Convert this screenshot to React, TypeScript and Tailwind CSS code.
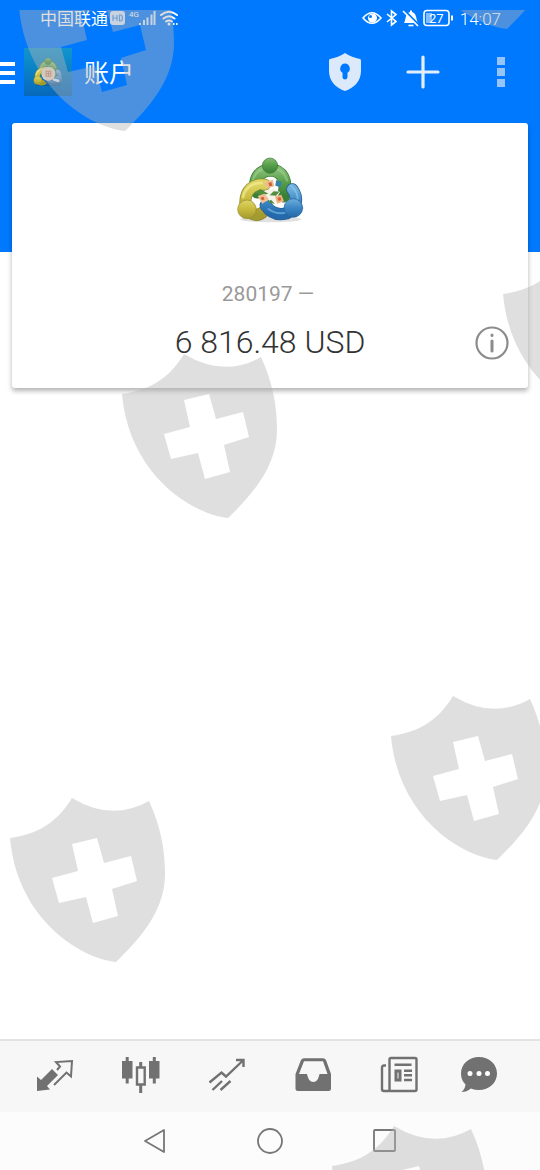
import type { ReactNode } from 'react'

const UI_FONT = "font-['Roboto','Noto_Sans_CJK_SC',sans-serif]"

function Shield({ className }: { className: string }) {
  return (
    <svg className={`absolute h-[164px] w-[158px] ${className}`} viewBox="0 0 158 164">
      <path
        fill="#b4b4b4"
        fillRule="evenodd"
        d="M1 40C28 36 47 26 63 0Q103 24 140 3C151 27 156 50 156 76C156 110 135 137 107 164C70 160 8 120 1 40Z
           M63 46L69 73L43 80L50 105L77 99L84 125L109 118L103 91L128 83L122 58L95 65L88 40Z"
      />
    </svg>
  )
}

function Watermark() {
  return (
    <div className="pointer-events-none absolute inset-x-0 top-[10px] bottom-0 overflow-hidden opacity-42" aria-hidden="true">
      <Shield className="-top-[43px] left-[18px]" />
      <Shield className="-top-[145px] left-[400px]" />
      <Shield className="top-[244px] left-[502px]" />
      <Shield className="top-[344px] left-[121px]" />
      <Shield className="top-[686px] left-[390px]" />
      <Shield className="top-[788px] left-[9px]" />
      <Shield className="top-[1116px] left-[331px]" />
    </div>
  )
}

function TraderLogo({ className, badge = false }: { className: string; badge?: boolean }) {
  return (
    <svg className={className} viewBox="0 0 300 300" fill="none" strokeLinecap="round">
      <defs>
        <linearGradient id="logoGreen" x1="0" y1="0" x2="0" y2="1">
          <stop offset="0" stopColor="#86bd76" />
          <stop offset="0.45" stopColor="#58a04b" />
          <stop offset="1" stopColor="#397f37" />
        </linearGradient>
        <linearGradient id="logoYellow" x1="0" y1="0" x2="0" y2="1">
          <stop offset="0" stopColor="#dfd565" />
          <stop offset="0.5" stopColor="#c6b93c" />
          <stop offset="1" stopColor="#a39a30" />
        </linearGradient>
        <linearGradient id="logoBlue" x1="0" y1="0" x2="0" y2="1">
          <stop offset="0" stopColor="#6eafdc" />
          <stop offset="0.5" stopColor="#3b86c4" />
          <stop offset="1" stopColor="#2469ab" />
        </linearGradient>
      </defs>
      <ellipse cx="152" cy="238" rx="92" ry="9" fill="#000" opacity="0.12" />
      {/* green */}
      <path d="M111 156C98 118 119 91 151 90C187 91 203 122 191 168" stroke="#3d7c38" strokeWidth="39" />
      <path d="M111 156C98 118 119 91 151 90C187 91 203 122 191 168" stroke="url(#logoGreen)" strokeWidth="34" />
      <path d="M99 119C106 96 126 84 150 83C176 84 194 99 201 121" stroke="#a3d18e" strokeWidth="7" opacity="0.55" />
      {/* yellow */}
      <path d="M135 134C99 130 75 151 76 190C79 226 112 233 132 214" stroke="#908a31" strokeWidth="36" />
      <path d="M135 134C99 130 75 151 76 190C79 226 112 233 132 214" stroke="url(#logoYellow)" strokeWidth="31" />
      <path d="M125 129C97 128 75 144 69 171" stroke="#f3eb91" strokeWidth="8" opacity="0.7" />
      {/* blue */}
      <path d="M217 148C236 174 230 207 200 220C168 228 149 214 137 196" stroke="#285f96" strokeWidth="37" />
      <path d="M217 148C236 174 230 207 200 220C168 228 149 214 137 196" stroke="url(#logoBlue)" strokeWidth="32" />
      <path d="M145 207C164 221 182 223 202 216" stroke="#7dc2ed" strokeWidth="6" opacity="0.6" />
      <path d="M212 136C228 150 235 166 232 183" stroke="#9bd1f1" strokeWidth="5" opacity="0.55" />
      <path d="M137 151L160 147L180 156L174 166L180 183L158 188L148 179L137 184L126 166Z" fill="#f4f3e9" />
      <path d="M104 158L121 147L145 161L124 166ZM149 166L161 154L178 155L168 167ZM143 187L153 179L165 192Z" fill="#528c3d" />
      <path d="M133 127L159 119L163 139L139 145Z" fill="#efbb8f" />
      <path d="M113 168L133 161L147 178L127 191Z" fill="#f3bf92" />
      <path d="M165 169L184 164L192 184L171 191Z" fill="#f0b384" />
      <path d="M168 121L185 125L181 142L166 137Z" fill="#3782ad" />
      <path d="M145 129L154 126L157 137L148 139ZM121 173L130 170L134 178L126 181ZM172 174L181 171L184 180L176 183Z" fill="#cc6337" />
      <circle cx="150" cy="77" r="23" fill="url(#logoGreen)" stroke="#3d7c38" strokeWidth="2" />
      <circle cx="81" cy="208" r="28" fill="url(#logoYellow)" stroke="#938c31" strokeWidth="2" />
      <circle cx="220" cy="204" r="28" fill="url(#logoBlue)" stroke="#285f96" strokeWidth="2" />
      {badge && (
        <>
          <circle cx="153" cy="162" r="48" fill="#e9d9c2" />
          <path d="M137 145H169V179H137ZM137 162H169M153 145V179" stroke="#cc8371" strokeWidth="7" />
          <path d="M190 202L219 210" stroke="#dfeef7" strokeWidth="17" />
        </>
      )}
    </svg>
  )
}

function StatusBar() {
  return (
    <div className="flex h-9 items-center justify-between pr-[39px] pl-10 text-[17px] leading-6">
      <div className="flex items-center">
        <span className="pt-px">中国联通</span>
        <svg className="h-6 w-[72px]" viewBox="0 0 72 24" fill="none">
          <rect x="2" y="5" width="15" height="14" rx="3" fill="#fff" opacity="0.85" />
          <path d="M5 9V15M9 9V15M5 12H9M11.500 9V15H12.500Q14.500 15 14.500 12T12.500 9Z" stroke="#3d91ee" strokeWidth="1.200" />
          <text x="21" y="11" fill="#fff" fontSize="8">4G</text>
          <path d="M32 17V19M36 14V19M39.500 11.500V19M43.500 8.500V19M46.500 5V19" stroke="#fff" strokeWidth="2" opacity="0.85" />
          <path d="M53 9Q61 2.500 69 9M55.500 12.500Q61 8 66.500 12.500M58 15.500Q61 13.500 64 15.500" stroke="#fff" strokeWidth="2" strokeLinecap="round" />
          <circle cx="61" cy="18" r="1.500" fill="#fff" />
          <path d="M65 18H66.500M68 18H69.500" stroke="#fff" strokeWidth="1.800" />
        </svg>
      </div>
      <div className="flex items-center gap-[6px]">
        <svg className="h-6 w-[92px]" viewBox="0 0 92 24" fill="none" stroke="#fff" strokeWidth="1.600">
          <path d="M1 12Q10 1.500 19 12Q10 22.500 1 12Z" />
          <circle cx="10.500" cy="12" r="4.500" fill="#fff" stroke="none" />
          <circle cx="8.500" cy="10.500" r="1.500" fill="#0079ff" stroke="none" />
          <path d="M25 8L34 15.500L29.500 19V5L34 8.500L25 16" />
          <path d="M42 17C44 14 43 7 48 6V4.500H50V6C55 7 54 14 56 17Z" fill="#fff" stroke="none" />
          <path d="M46.500 19.500H51.500" />
          <path d="M42.500 4.500L57.500 19.500" stroke="#0079ff" strokeWidth="2" />
          <path d="M41 5L56 20" />
          <rect x="62" y="4.500" width="25" height="15" rx="3" />
          <rect x="64" y="7" width="6" height="10" fill="#fff" opacity="0.5" stroke="none" />
          <path d="M90 9.500V14.500" strokeWidth="2" />
          <text x="67" y="16.500" fill="#fff" stroke="none" fontSize="13">27</text>
        </svg>
        <span className="pt-px font-light">14:07</span>
      </div>
    </div>
  )
}

function Toolbar() {
  return (
    <div className="flex h-[72px] items-center">
      <button className="w-6" aria-label="菜单">
        <svg className="h-6 w-6" viewBox="0 0 24 24" stroke="#fff" strokeWidth="4">
          <path d="M0 4H15M0 13H15M0 22H15" />
        </svg>
      </button>
      <div className="flex h-12 w-12 items-center justify-center bg-linear-to-b from-[#1295cf] to-[#0868bb]">
        <TraderLogo className="h-11 w-11" badge />
      </div>
      <h1 className="ml-3 flex-1 pt-1 text-[25px] leading-8">账户</h1>
      <button className="flex w-[78px] justify-center" aria-label="安全">
        <svg className="h-10 w-[34px]" viewBox="0 0 34 40">
          <path
            fill="#dce9fb"
            fillRule="evenodd"
            d="M17 1C13 4 7 6 2 7Q1 7 1 9V19C1 29 8 36 17 39C26 36 33 29 33 19V9Q33 7 32 7C27 6 21 4 17 1ZM17 11.500A5 5 0 0 1 19.500 20.700V25.500Q19 27.500 17 27.500T14.500 25.500V20.700A5 5 0 0 1 17 11.500Z"
          />
        </svg>
      </button>
      <button className="flex w-[78px] justify-center" aria-label="添加">
        <svg className="h-9 w-9" viewBox="0 0 36 36" stroke="#e3eefc" strokeWidth="3.200" strokeLinecap="round">
          <path d="M3 18H33M18 3V33" />
        </svg>
      </button>
      <button className="flex w-[78px] justify-center" aria-label="更多">
        <svg className="h-8 w-2" viewBox="0 0 8 32" fill="#96c4fa">
          <path d="M0 1H8V9H0ZM0 12H8V20H0ZM0 23H8V31H0Z" />
        </svg>
      </button>
    </div>
  )
}

function AccountCard() {
  return (
    <section className="mx-3 -mt-[129px] rounded-[3px] bg-white pt-[17px] pb-[26px] shadow-[0_3px_5px_rgba(0,0,0,0.3)]">
      <TraderLogo className="mx-auto h-[100px] w-[100px]" />
      <p className="mt-10 pr-1 text-center text-[21px] leading-7 text-[#999]">280197 —</p>
      <div className="mt-[14px] grid grid-cols-[1fr_auto_1fr] items-center">
        <span />
        <p className="text-[32px] leading-10 font-light text-[#333]">6 816.48 USD</p>
        <button className="mr-[18px] justify-self-end" aria-label="账户信息">
          <svg className="h-9 w-9" viewBox="0 0 36 36" fill="none" stroke="#8c8c8c" strokeLinecap="round">
            <circle cx="18" cy="19" r="15.500" strokeWidth="2.200" />
            <path d="M18 17V27M18 11V11.500" strokeWidth="3" />
          </svg>
        </button>
      </div>
    </section>
  )
}

function TabButton({ label, className = '', children }: { label: string; className?: string; children: ReactNode }) {
  return (
    <button className={`flex justify-center ${className}`} aria-label={label}>
      <svg className="h-10 w-10" viewBox="0 0 40 40" fill="none" stroke="#717171" strokeWidth="2.400">
        {children}
      </svg>
    </button>
  )
}

function TabBar() {
  return (
    <nav className="grid h-[73px] grid-cols-6 items-center border-t-2 border-[#e3e3e3] bg-[#f7f7f7] px-3 pb-1">
      <TabButton label="行情">
        <path d="M2 21.500L6 25L17 14L23 20L12 31L15 34.500L2 36Z" fill="#717171" stroke="none" />
        <path d="M22 15L25 11.500L21 7L37 6L36 21.500L31.500 17.500L19 30" strokeWidth="2" />
      </TabButton>
      <TabButton label="图表">
        <path d="M1 6H11.500V23.500H1ZM28 6H38.500V23.500H28Z" fill="#717171" stroke="none" />
        <path d="M6.200 2V28.500M33.300 2V28.500M19.700 7V12M19.700 30V38" strokeWidth="3" />
        <path d="M16 12.500H23.700V29.500H16Z" />
      </TabButton>
      <TabButton label="交易">
        <path d="M2.500 27.500L14.500 17.500L19 21.500L36 5.500M29 5H36.500V12M5.500 35L15 26M13.500 35L23.500 26" />
      </TabButton>
      <TabButton label="历史">
        <path
          fill="#717171"
          stroke="none"
          fillRule="evenodd"
          d="M11 3.300H30Q32 3.300 33 5L38 19V33.500Q38 36 35.500 36H5Q2.500 36 2.500 33.500V19L8 5Q9 3.300 11 3.300ZM11 6.300L6 19H14C15 24 17 27 20.300 27S25.500 24 26.500 19H34.500L30 6.300Z"
        />
      </TabButton>
      <TabButton label="新闻">
        <rect x="10.500" y="3" width="27" height="33" rx="1.500" />
        <path d="M7 10.500H5Q3 10.500 3 12.500V34Q3 36 5 36H11" />
        <path d="M15.500 9.700H32.500M25 15.700H33M25 20.300H33M25 25H33" />
        <path d="M17 16H21V25H17Z" strokeWidth="3" />
      </TabButton>
      <TabButton label="聊天" className="pr-3">
        <path
          fill="#717171"
          stroke="none"
          d="M20 2C30 2 38 9 38 18.500S30 35 20 35Q15.500 35 12 33.500C9 36 6 37 2.500 37Q6 34 6.500 29.500Q2 25 2 18.500C2 9 10 2 20 2Z"
        />
        <path d="M11 18.500H11.010M20 18.500H20.010M28.500 18.500H28.510" stroke="#fff" strokeWidth="5" strokeLinecap="round" />
      </TabButton>
    </nav>
  )
}

function SystemBar() {
  return (
    <div className="flex h-[58px] items-center justify-center bg-[#fcfcfc]">
      <button className="flex w-[115px] justify-center" aria-label="返回">
        <svg className="h-7 w-7" viewBox="0 0 28 28" fill="none" stroke="#777" strokeWidth="1.800" strokeLinejoin="round">
          <path d="M23 3V25L4 14Z" />
        </svg>
      </button>
      <button className="flex w-[115px] justify-center" aria-label="主屏幕">
        <svg className="h-7 w-7" viewBox="0 0 28 28" fill="none" stroke="#777" strokeWidth="1.800">
          <circle cx="14" cy="14" r="12" />
        </svg>
      </button>
      <button className="flex w-[115px] justify-center" aria-label="最近任务">
        <svg className="h-7 w-7" viewBox="0 0 28 28" fill="none" stroke="#777" strokeWidth="1.800">
          <rect x="3" y="3" width="21" height="21" rx="1" />
        </svg>
      </button>
    </div>
  )
}

export default function App() {
  return (
    <div className={`relative flex min-h-screen flex-col bg-white ${UI_FONT}`}>
      <header className="bg-[#0079ff] pb-36 text-white">
        <StatusBar />
        <Toolbar />
      </header>
      <main className="flex-1">
        <AccountCard />
      </main>
      <TabBar />
      <SystemBar />
      <Watermark />
    </div>
  )
}
